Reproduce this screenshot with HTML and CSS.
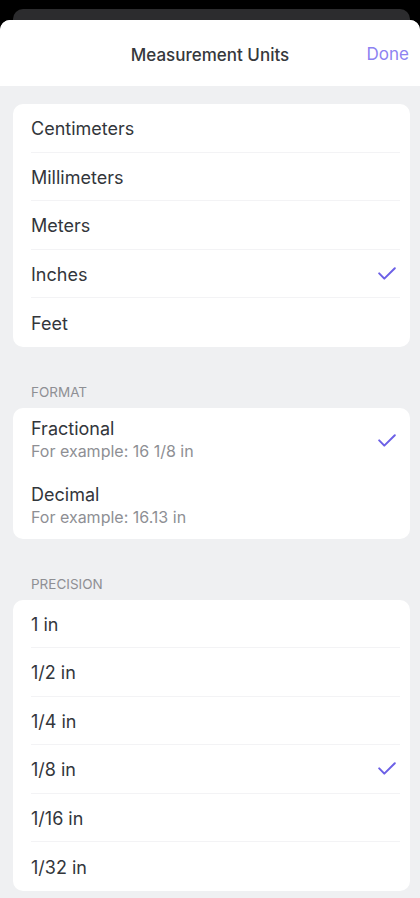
FILE: index.html
```html
<!DOCTYPE html>
<html lang="en">
<head>
  <meta charset="UTF-8">
  <meta name="viewport" content="width=device-width, initial-scale=1.0">
  <title>Measurement Units</title>
  <link rel="stylesheet" href="styles.css">
</head>
<body>
  <div class="behind"></div>
  <div class="sheet">
    <div class="header">
      <h1>Measurement Units</h1>
      <button class="done">Done</button>
    </div>

    <div class="content">
      <div class="card">
        <div class="row"><span>Centimeters</span></div>
        <div class="row"><span>Millimeters</span></div>
        <div class="row"><span>Meters</span></div>
        <div class="row"><span>Inches</span>
          <svg class="check" width="18" height="13" viewBox="0 0 18 13"><path d="M1.2 6.4 L6.3 11.6 L16.8 1.2" /></svg>
        </div>
        <div class="row last"><span>Feet</span></div>
      </div>

      <div class="label">FORMAT</div>
      <div class="card">
        <div class="row tall">
          <div>
            <div class="title">Fractional</div>
            <div class="sub">For example: 16 1/8 in</div>
          </div>
          <svg class="check" width="18" height="13" viewBox="0 0 18 13"><path d="M1.2 6.4 L6.3 11.6 L16.8 1.2" /></svg>
        </div>
        <div class="row tall last">
          <div>
            <div class="title">Decimal</div>
            <div class="sub">For example: 16.13 in</div>
          </div>
        </div>
      </div>

      <div class="label">PRECISION</div>
      <div class="card">
        <div class="row"><span>1 in</span></div>
        <div class="row"><span>1/2 in</span></div>
        <div class="row"><span>1/4 in</span></div>
        <div class="row"><span>1/8 in</span>
          <svg class="check" width="18" height="13" viewBox="0 0 18 13"><path d="M1.2 6.4 L6.3 11.6 L16.8 1.2" /></svg>
        </div>
        <div class="row"><span>1/16 in</span></div>
        <div class="row last"><span>1/32 in</span></div>
      </div>
    </div>
  </div>
</body>
</html>
```

FILE: styles.css
```css
body {
  margin: 0;
  background: #000;
  font-family: Inter, "Noto Sans", sans-serif;
  color: #33363b;
}
.behind {
  height: 11px;
  margin: 9px 10px 0 13px;
  background: #2c2c2e;
  border-radius: 10px 10px 0 0;
}
.sheet {
  background: #eff0f2;
  border-radius: 10px 10px 0 0;
  min-height: 878px;
  overflow: hidden;
}
.header {
  height: 66px;
  box-sizing: border-box;
  padding-top: 4px;
  background: #fff;
  display: flex;
  align-items: center;
  justify-content: center;
  position: relative;
}
.header h1 {
  margin: 0;
  font-size: 17px;
  font-weight: 500;
  color: #36383c;
}
.done {
  position: absolute;
  right: 11px;
  top: 24px;
  border: none;
  background: none;
  padding: 0;
  font-family: inherit;
  font-size: 17px;
  color: #8d82f1;
}
.content {
  padding: 18px 10px 10px 13px;
}
.card {
  background: #fff;
  border-radius: 10px;
}
.row {
  height: 48.5px;
  box-sizing: border-box;
  margin: 0 10px 0 18px;
  padding-right: 4px;
  display: flex;
  align-items: center;
  justify-content: space-between;
  border-bottom: 1px solid #f3f3f5;
  font-size: 18px;
}
.row span {
  padding-top: 2px;
}
.row.tall {
  height: 65.5px;
  border-bottom: none;
}
.row.last {
  border-bottom: none;
}
.title {
  font-size: 18px;
  line-height: 23px;
}
.sub {
  font-size: 16px;
  line-height: 23px;
  color: #8e8f94;
}
.check path {
  fill: none;
  stroke: #6c60e6;
  stroke-width: 2;
  stroke-linecap: round;
  stroke-linejoin: round;
}
.label {
  padding: 36px 0 7px 18px;
  line-height: 18px;
  font-size: 13.5px;
  color: #8e8f94;
}
```
